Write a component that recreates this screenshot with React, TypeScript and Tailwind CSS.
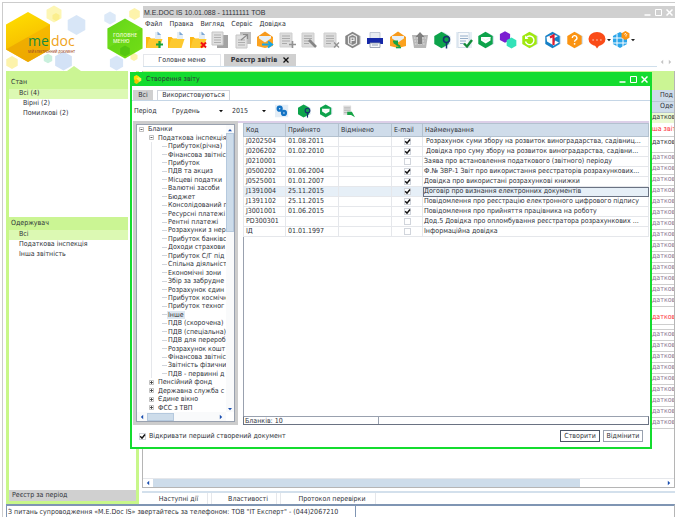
import React, { useState } from "react";

interface HexProps {
  cx: number;
  cy: number;
  r: number;
  fill: string;
  opacity?: number;
}

// Hexagon with a vertex on top
const Hex: React.FC<HexProps> = ({ cx, cy, r, fill, opacity = 1 }) => {
  const w = r * 0.88;
  const points = [
    [cx, cy - r],
    [cx + w, cy - r / 2],
    [cx + w, cy + r / 2],
    [cx, cy + r],
    [cx - w, cy + r / 2],
    [cx - w, cy - r / 2],
  ]
    .map((p) => p.join(","))
    .join(" ");
  return <polygon points={points} fill={fill} opacity={opacity} />;
};

const Icon: React.FC<{ children: React.ReactNode }> = ({ children }) => (
  <svg viewBox="0 0 18 18" className="block size-[18px]" aria-hidden="true">
    {children}
  </svg>
);

const Folder = ({ mark }: { mark?: "plus" | "cross" }) => (
  <Icon>
    <path d="M10 1h3.5l2.500 3v4h-6z" fill="#e3edf6" />
    <path d="M12.500 0.500v3.500h3.700z" fill="#7ba7d6" />
    <path d="M1 6h3.500l1.500 1.500h4V17H1z" fill="#fdb813" />
    <path d="M4 8h13.500L14.500 17H1.500z" fill="#fdc92f" />
    {mark === "plus" && <path d="M11 13.500h7M14.500 10v7" stroke="#14a33d" strokeWidth="2.200" />}
    {mark === "cross" && <path d="M12 11.500l5 5M17 11.500l-5 5" stroke="#f01010" strokeWidth="2" />}
  </Icon>
);

const GrayDoc = ({ mark }: { mark: "plus" | "pen" | "cross" }) => (
  <Icon>
    <path d="M2 2h12v14H2z" fill="#dcdcdc" stroke="#cfcfcf" />
    <path d="M4 5h8M4 7.500h8M4 10h8M4 12.500h5" stroke="#aaa" strokeWidth="1" />
    {mark === "plus" && <path d="M11 13.500h7M14.500 10v7" stroke="#929292" strokeWidth="1.600" />}
    {mark === "pen" && <path d="M9 9l7 7" stroke="#858585" strokeWidth="2.600" />}
    {mark === "cross" && <path d="M12 11.500l5 5M17 11.500l-5 5" stroke="#929292" strokeWidth="1.400" />}
  </Icon>
);

const GreenKeyIcon = () => (
  <Icon>
    <Hex cx={10.5} cy={9} r={8} fill="#d5e3ee" />
    <Hex cx={8.5} cy={9} r={8.2} fill="#0da34b" />
    <circle cx="13.500" cy="8.500" r="3" fill="#0da34b" stroke="#17306e" strokeWidth="1.500" />
    <path d="M13.500 11v6.500" stroke="#17306e" strokeWidth="1.500" />
  </Icon>
);

const GreenMailIcon = () => (
  <Icon>
    <Hex cx={10.5} cy={9} r={7.5} fill="#d5e3ee" />
    <Hex cx={8.5} cy={9} r={8.2} fill="#0da34b" />
    <path d="M4 6h9.500v3.500L8.700 12.500 4 9.500z" fill="#fff" />
    <path d="M4 6.500l4.700 3 4.800-3" stroke="#e2f4e8" fill="none" strokeWidth="0.800" />
  </Icon>
);

const toolbar = [
  { name: "Створити", icon: <Folder mark="plus" /> },
  { name: "Відкрити", icon: <Folder /> },
  { name: "Видалити", icon: <Folder mark="cross" /> },
  {
    name: "Копіювати",
    icon: (
      <Icon>
        <path d="M6 4h11v13H6z" fill="#a3a3a3" />
        <path d="M1 1h11v13H1z" fill="#e0e0e0" stroke="#c6c6c6" />
        <path d="M3 4h7M3 6.500h7M3 9h7M3 11.500h7" stroke="#b0b0b0" />
      </Icon>
    ),
  },
  {
    name: "Перемістити",
    icon: (
      <Icon>
        <path d="M6 1h11v12H6z" fill="#bdbdbd" />
        <path d="M2 4h11v13H2z" fill="#e0e0e0" stroke="#c6c6c6" />
        <path d="M4 9h7M4 11.500h7M4 14h7" stroke="#adadad" />
        <path d="M7 9l6-5M9 3.500h4.500V8" stroke="#8b8b8b" fill="none" strokeWidth="1.200" />
      </Icon>
    ),
  },
  {
    name: "Надіслати",
    icon: (
      <Icon>
        <path d="M1 6l8-5.500L17 6v8.500H1z" fill="#f79a1c" />
        <path d="M3 5h12v4l-6 3-6-3z" fill="#e6eff6" />
        <path d="M1 6l8 5.500L17 6v9L9 17l-8-2z" fill="#fba21f" />
        <path d="M6 13.500h9M12 10.500l4 3-4 3" stroke="#18a6e4" strokeWidth="2" fill="none" />
      </Icon>
    ),
  },
  { name: "Додати рядок", icon: <GrayDoc mark="plus" /> },
  { name: "Редагувати", icon: <GrayDoc mark="pen" /> },
  { name: "Вилучити рядок", icon: <GrayDoc mark="cross" /> },
  {
    name: "Архів",
    icon: (
      <Icon>
        <Hex cx={10.5} cy={9} r={7.5} fill="#dadada" />
        <Hex cx={8.5} cy={9} r={8.2} fill="#858585" />
        <path d="M4.500 5.500L8.500 3.500l4 2v7l-4 2-4-2z" fill="none" stroke="#e8e8e8" strokeWidth="1.200" />
        <path d="M7 7h3v2.500H7zM7 7v5.500" fill="none" stroke="#eee" strokeWidth="1.200" />
      </Icon>
    ),
  },
  {
    name: "Друк",
    icon: (
      <Icon>
        <path d="M4 1.500h10v6H4z" fill="#e8ecf2" stroke="#b4bccb" strokeWidth="0.800" />
        <path d="M1 7h16v6H1z" fill="#1528a8" />
        <path d="M4 12h10v4.500H4z" fill="#f4f6f9" stroke="#8692a6" strokeWidth="0.800" />
        <path d="M6 14h6" stroke="#91a0b8" />
      </Icon>
    ),
  },
  {
    name: "Обмін поштою",
    icon: (
      <Icon>
        <path d="M1 6l8-5.500L17 6v8.500H1z" fill="#f79a1c" />
        <path d="M3 5h12v4l-6 3-6-3z" fill="#e6eff6" />
        <path d="M1 6l8 5.500L17 6v9L9 17l-8-2z" fill="#fba21f" />
        <path d="M4 10.500h4v4M11 15.500L5 11.500" stroke="#16a345" strokeWidth="2" fill="none" />
        <path d="M7 16.500h5" stroke="#16a345" strokeWidth="1.600" />
      </Icon>
    ),
  },
  {
    name: "Відновити",
    icon: (
      <Icon>
        <path d="M1 4h16l-2 13H3z" fill="#b8b8b8" />
        <path d="M3 7h12M3.500 10h11M4 13h10" stroke="#e2e2e2" strokeDasharray="1.500 1.200" />
        <path d="M9 1l4.500 5H11v7H7V6H4.500z" fill="#7f7f7f" />
      </Icon>
    ),
  },
  { name: "Пошук", icon: <GreenKeyIcon /> },
  {
    name: "Перевірити",
    icon: (
      <Icon>
        <path d="M1 1h16v16H1z" fill="#e6eef5" />
        <path d="M3 1.500h11v15H3z" fill="#f8fafc" stroke="#c9d6e3" strokeWidth="0.800" />
        <path d="M5 5h8M5 7.500h8M5 10h6M5 12.500h4" stroke="#8ba6c4" strokeWidth="0.900" />
        <path d="M9 12.500l3 3L17 9" stroke="#128a38" strokeWidth="2.400" fill="none" />
      </Icon>
    ),
  },
  { name: "Пошта", icon: <GreenMailIcon /> },
  {
    name: "Довідники",
    icon: (
      <Icon>
        <Hex cx={6} cy={6} r={5.8} fill="#7b1fd1" />
        <Hex cx={12.5} cy={12} r={5.5} fill="#33e2b8" />
      </Icon>
    ),
  },
  {
    name: "Оновити",
    icon: (
      <Icon>
        <Hex cx={10.5} cy={9} r={7.5} fill="#d5e3ee" />
        <Hex cx={8.5} cy={9} r={8.2} fill="#9fe80e" />
        <path d="M5 7a4.300 4.300 0 1 1-.5 3.500" stroke="#fff" strokeWidth="1.400" fill="none" />
        <path d="M4 4.500v3.500h3.500z" fill="#fff" />
      </Icon>
    ),
  },
  {
    name: "1С",
    icon: (
      <Icon>
        <Hex cx={10.5} cy={9} r={7.5} fill="#d5e3ee" />
        <Hex cx={8.5} cy={9} r={8.2} fill="#1680c6" />
        <path d="M2.500 6l6-2.500 5.500 1.500-5 3v6L3 10.500z" fill="#fff" />
        <path d="M9 15l6-3.500-4-2z" fill="#fff" />
        <path d="M6 6.500l3.500-2v9.500" stroke="#e21a2c" strokeWidth="2.200" fill="none" />
      </Icon>
    ),
  },
  {
    name: "Допомога",
    icon: (
      <Icon>
        <Hex cx={10.5} cy={9} r={7.5} fill="#d5e3ee" />
        <Hex cx={8.5} cy={9} r={8.2} fill="#fb9412" />
        <path d="M6.300 7a2.300 2.300 0 1 1 3.300 2c-.8.500-1 .800-1 1.800" stroke="#fff" strokeWidth="1.400" fill="none" />
        <circle cx="8.600" cy="12.800" r="0.900" fill="#fff" />
      </Icon>
    ),
  },
  {
    name: "Повідомлення",
    icon: (
      <Icon>
        <ellipse cx="9" cy="8" rx="8.500" ry="7" fill="#fa4b18" />
        <path d="M6 13l3 4.500 3-4z" fill="#fa4b18" />
        <path d="M4.500 9h1.200M8.400 9h1.200M12.300 9h1.200" stroke="#fff" strokeWidth="1.200" />
      </Icon>
    ),
  },
];

const treeItems = [
  "Прибуток(річна)",
  "Фінансова звітніс",
  "Прибуток",
  "ПДВ та акциз",
  "Місцеві податки",
  "Валютні засоби",
  "Бюджет",
  "Консолідований п",
  "Ресурсні платежі",
  "Рентні платежі",
  "Розрахунки з нер",
  "Прибуток банківс",
  "Доходи страхови",
  "Прибуток С/Г під",
  "Спільна діяльніст",
  "Економічні зони",
  "Збір за забрудне",
  "Розрахунок єдин",
  "Прибуток космічн",
  "Прибуток техног",
  "Інше",
  "ПДВ (скорочена)",
  "ПДВ (спеціальна)",
  "ПДВ для перероб",
  "Розрахунок кошт",
  "Фінансова звітніс",
  "Звітність фізични",
  "ПДВ - первинні д",
];

const treeFolders = ["Пенсійний фонд", "Державна служба с", "Єдине вікно", "ФСС з ТВП"];

const reports = [
  { code: "J0202504", accepted: "01.08.2011", email: true, title: " Розрахунок суми збору на розвиток виноградарства, садівниц..." },
  { code: "J0206202", accepted: "01.02.2010", email: true, title: " Довідка про суму збору на розвиток виноградарства, садівни..." },
  { code: "J0210001", accepted: "", email: false, title: "Заява про встановлення податкового (звітного) періоду" },
  { code: "J0500202", accepted: "01.06.2004", email: true, title: "Ф.№ ЗВР-1 Звіт про використання реєстраторів розрахункових..." },
  { code: "J0525001", accepted: "01.01.2007", email: true, title: "Довідка про використані розрахункові книжки" },
  { code: "J1391004", accepted: "25.11.2015", email: true, title: "Договір про визнання електронних документів" },
  { code: "J1391102", accepted: "25.11.2015", email: true, title: "Повідомлення про реєстрацію електронного цифрового підпису" },
  { code: "J3001001", accepted: "01.06.2015", email: true, title: "Повідомлення про прийняття працівника на роботу" },
  { code: "PD300301", accepted: "", email: false, title: "Дод.5 Довідка про опломбування реєстратора розрахункових ..." },
  { code: "ІД", accepted: "01.01.1997", email: false, title: "Інформаційна довідка" },
];

const Checkbox: React.FC<{ id: string; label?: string; checked: boolean; onChange: () => void }> = ({
  id,
  label,
  checked,
  onChange,
}) => (
  <span className="relative block size-[7px] shrink-0">
    <input
      id={id}
      type="checkbox"
      aria-label={label}
      checked={checked}
      onChange={onChange}
      className="block size-[7px] appearance-none border border-gray-300 bg-white"
    />
    {checked && (
      <svg viewBox="0 0 7 7" className="pointer-events-none absolute inset-0 size-[7px]">
        <path d="M1.200 3.300L3 5.200 6 1.500" stroke="#111" strokeWidth="1.500" fill="none" />
      </svg>
    )}
  </span>
);

const Arrow: React.FC<{ dir: "up" | "down" | "left" | "right"; color?: string }> = ({ dir, color = "#1b4fb0" }) => {
  const d = {
    up: "M1 4.200L3 2l2 2.200z",
    down: "M1 2L3 4.200l2-2.200z",
    left: "M4.200 0.800L1.800 3l2.400 2.200z",
    right: "M1.800 0.800L4.200 3l-2.400 2.200z",
  }[dir];
  return (
    <svg viewBox="0 0 6 6" className="block size-1.5 shrink-0" aria-hidden="true">
      <path d={d} fill={color} />
    </svg>
  );
};

const WindowButtons = () => (
  <div className="flex gap-1 text-white">
    <button aria-label="Згорнути">
      <svg viewBox="0 0 7 7" className="block size-[7px]">
        <path d="M0.500 6h6" stroke="currentColor" strokeWidth="1.500" />
      </svg>
    </button>
    <button aria-label="Розгорнути">
      <svg viewBox="0 0 7 7" className="block size-[7px]">
        <path d="M0.500 0.500h6v6h-6z" stroke="currentColor" fill="none" />
      </svg>
    </button>
    <button aria-label="Закрити">
      <svg viewBox="0 0 7 7" className="block size-[7px]">
        <path d="M0.500 0.500l6 6M6.500 0.500l-6 6" stroke="currentColor" strokeWidth="1.500" />
      </svg>
    </button>
  </div>
);

const Logo = () => (
  <svg viewBox="0 0 140 68" className="block h-[68px] w-[140px] shrink-0" role="img" aria-label="me doc">
    <defs>
      <linearGradient id="gold" x1="0" y1="0" x2="0.300" y2="1">
        <stop offset="0" stopColor="#ffe100" />
        <stop offset="1" stopColor="#f5b400" />
      </linearGradient>
      <linearGradient id="lime" x1="0" y1="0" x2="1" y2="1">
        <stop offset="0" stopColor="#5fd318" />
        <stop offset="1" stopColor="#86ea1e" />
      </linearGradient>
    </defs>
    <Hex cx={51} cy={11} r={8.5} fill="#fdf6b4" />
    <Hex cx={53} cy={14} r={4} fill="#fbee8c" />
    <Hex cx={73.5} cy={22} r={10} fill="#d8e6f7" />
    <Hex cx={107} cy={15} r={6.5} fill="#dce9f8" />
    <Hex cx={131.5} cy={11} r={6} fill="#fdf3ab" />
    <Hex cx={9} cy={59.5} r={6.5} fill="#fdf3ab" />
    <Hex cx={45} cy={55.5} r={4.8} fill="#c9f0dd" />
    <Hex cx={60.5} cy={58} r={9.5} fill="#d3e2f6" />
    <Hex cx={113.5} cy={60} r={7.5} fill="#d8e6f7" />
    <Hex cx={131} cy={54} r={4} fill="#fdf3ab" />
    <Hex cx={25} cy={34} r={25} fill="url(#gold)" />
    <path d="M3 46.500L25 34l22 12.500L25 59z" fill="#dd9a00" opacity="0.450" />
    <path d="M3 46.500l22-12.500 22-12.500v25L25 59z" fill="#f1a900" opacity="0.500" />
    <Hex cx={122} cy={35.5} r={20} fill="url(#lime)" />
    <path d="M105 45l34-20v20l-17 10.500z" fill="#53c90c" opacity="0.350" />
    <Hex cx={122} cy={48} r={5.5} fill="#45b90f" opacity={0.6} />
    <text x="25" y="43" fontSize="14" fontFamily="Open Sans, sans-serif" fill="#178a3c">
      me
    </text>
    <text x="48" y="43" fontSize="14" fontFamily="Open Sans, sans-serif" fill="#efa31a">
      doc
    </text>
    <text x="25" y="50" fontSize="3" fontFamily="Open Sans, sans-serif" fontWeight="600" fill="#a4502a">
      МІЙ ЕЛЕКТРОННИЙ ДОКУМЕНТ
    </text>
    <text x="122" y="34" fontSize="5" textAnchor="middle" fontFamily="Open Sans, sans-serif" fontWeight="600" fill="#effbd8">
      ГОЛОВНЕ
    </text>
    <text x="110" y="40" fontSize="5" fontFamily="Open Sans, sans-serif" fontWeight="600" fill="#effbd8">
      МЕНЮ
    </text>
  </svg>
);

const Header = () => (
  <header className="flex h-[68px] shrink-0">
    <Logo />
    <div className="flex min-w-0 flex-1 flex-col pt-[3px]">
      <div className="flex h-3 shrink-0 items-center justify-between bg-[#d0d0d0] pr-0.5 pl-px">
        <h1 className="font-['Liberation_Sans',sans-serif]">M.E.DOC IS 10.01.088 - 11111111 ТОВ</h1>
        <WindowButtons />
      </div>
      <nav className="flex h-3 shrink-0 items-center gap-[7px] pl-0.5">
        {["Файл", "Правка", "Вигляд", "Сервіс", "Довідка"].map((item) => (
          <button key={item}>{item}</button>
        ))}
      </nav>
      <div className="flex h-[20px] shrink-0 items-center pl-0.5">
        <div className="flex w-[461px] shrink-0 justify-between">
          {toolbar.map((tool) => (
            <button key={tool.name} aria-label={tool.name}>
              {tool.icon}
            </button>
          ))}
        </div>
        <Arrow dir="down" color="#222" />
        <button aria-label="Підтримка">
          <Icon>
            <Hex cx={8} cy={9} r={8} fill="#2aa5ea" />
            <path d="M5 3v13M11 5v11M1 7h14M1 12h14" stroke="#fff" strokeWidth="1" />
            <Hex cx={13.5} cy={4.5} r={4.5} fill="#fb9412" />
            <path d="M12.500 3.500a1 1 0 1 1 1.500 1v1" stroke="#fff" fill="none" strokeWidth="0.900" />
          </Icon>
        </button>
        <Arrow dir="down" color="#222" />
      </div>
      <div className="mt-1 flex h-[13px] shrink-0 items-end">
        <div className="flex h-full flex-1 gap-[3px] border-b border-[#cfdfec]">
          <button className="w-[78px] border border-b-0 border-gray-200">Головне меню</button>
          <button className="flex w-[72px] items-center justify-center gap-1.5 bg-[#d0d0d0] font-bold">
            <span>Реєстр звітів</span>
            <svg viewBox="0 0 6 6" className="size-1.5">
              <path d="M0.500 0.500l5 5M5.500 0.500l-5 5" stroke="#111" strokeWidth="1.300" />
            </svg>
          </button>
        </div>
        <div className="flex gap-0.5 px-0.5 pb-0.5">
          <Arrow dir="left" color="#c4c4c4" />
          <Arrow dir="right" color="#c4c4c4" />
        </div>
      </div>
    </div>
  </header>
);

const Sidebar = () => (
  <aside className="relative ml-[3px] flex w-[133px] shrink-0 flex-col border-[3px] border-t-0 border-[#c8f78a]">
    <svg viewBox="0 0 14 5" className="absolute -top-[5px] left-[58px] h-[5px] w-3.5">
      <path d="M0 5l7-5 7 5z" fill="#cbf594" />
    </svg>
    <section className="h-[146px] shrink-0">
      <h2 className="mr-2 flex h-[18px] items-end bg-[#cbf594] pb-0.5 pl-0.5">Стан</h2>
      <ul className="mr-2">
        <li className="h-[10px] bg-[#dcf9b3] pl-2.5">Всі (4)</li>
        <li className="h-[10px] pl-3.5">Вірні (2)</li>
        <li className="h-[10px] pl-3.5">Помилкові (2)</li>
      </ul>
    </section>
    <section className="flex-1">
      <h2 className="mr-2 flex h-[13px] items-center bg-[#cbf594] pl-0.5">Одержувач</h2>
      <ul className="mr-2">
        <li className="h-[10px] bg-[#dcf9b3] pl-2.5">Всі</li>
        <li className="h-[10px] pl-2.5">Податкова інспекція</li>
        <li className="h-[10px] pl-2.5">Інша звітність</li>
      </ul>
    </section>
    <button className="h-[11px] bg-[#d0d0d0] pl-[3px] text-left">Реєстр за період</button>
  </aside>
);

const Registry = () => (
  <main className="ml-[3px] flex min-w-0 flex-1 flex-col">
    <div className="flex flex-1 flex-col overflow-hidden border border-t-0 border-[#b5b5b5]">
      <div className="h-[19px] shrink-0 bg-[#cbf594]" />
      <table className="ml-auto w-[22px] table-fixed border-collapse whitespace-nowrap">
        <thead>
          <tr className="h-[11px] border-b border-[#b9c6d4] bg-[#cfdcea]">
            <th className="pl-2 text-left font-normal">Под</th>
          </tr>
          <tr className="h-[11px] border-b border-[#b9c6d4] bg-[#cfdcea]">
            <th className="pl-2 text-left font-normal">Оде</th>
          </tr>
        </thead>
        <tbody>
          <tr className="h-[11px] bg-[#ecf9d2]">
            <td>датков</td>
          </tr>
          <tr className="h-[13px] border-b border-[#cecece] text-red-500">
            <td>ша звіт</td>
          </tr>
          <tr className="h-[12px]">
            <td>датков</td>
          </tr>
          <tr className="h-[4px] border-b border-[#cecece]">
            <td />
          </tr>
          {Array.from({ length: 14 }, (_, i) => (
            <tr key={i} className="h-[11px] border-b border-[#cecece] text-[#8a7590]">
              <td>датков</td>
            </tr>
          ))}
          <tr className="h-[18px] border-b border-[#cecece] text-red-500">
            <td className="pt-1">датков</td>
          </tr>
          <tr className="h-[5px] border-b border-[#cecece]">
            <td />
          </tr>
          {Array.from({ length: 9 }, (_, i) => (
            <tr key={i} className="h-[11px] border-b border-[#cecece] text-[#8a7590]">
              <td>датков</td>
            </tr>
          ))}
        </tbody>
      </table>
      <div className="mt-auto flex h-[9px] items-center justify-between border-t border-gray-200 px-0.5">
        <Arrow dir="left" />
        <div className="mr-[86px] ml-0.5 h-full flex-1 bg-[#cddcea]" />
        <Arrow dir="right" />
      </div>
    </div>
    <div className="mt-[3px] flex h-[13px] gap-[3px] border-t-2 border-[#d3e0ec]">
      <button className="w-[66px] border-r border-gray-200 pt-px pl-2">Наступні дії</button>
      <button className="w-[66px] border-x border-gray-200 pt-px pl-2">Властивості</button>
      <button className="w-[96px] border-x border-gray-200 pt-px pl-2">Протокол перевірки</button>
    </div>
  </main>
);

const Toggle: React.FC<{ open: boolean }> = ({ open }) => (
  <svg viewBox="0 0 5 5" className="size-[5px] shrink-0 bg-white" aria-hidden="true">
    <path d="M0.500 0.500h4v4h-4z" fill="none" stroke="#a8a8a8" strokeWidth="0.700" />
    <path d={open ? "M1.500 2.500h2" : "M1 2.500h3M2.500 1v3"} stroke="#333" strokeWidth="0.800" />
  </svg>
);

const BlankTree = () => {
  const [selected, setSelected] = useState("Інше");

  return (
    <div className="flex w-[105px] shrink-0 border-[3px] border-[#cccccc]">
      <div className="flex min-w-0 flex-1 flex-col border border-gray-400 bg-white">
        <div className="flex min-h-0 flex-1">
          <ul className="flex min-w-0 flex-1 flex-col overflow-hidden whitespace-nowrap">
            <li className="flex flex-1 items-center gap-1 pl-0.5 leading-[8px]">
              <Toggle open />
              Бланки
            </li>
            <li className="flex flex-1 items-center gap-1 pl-3 leading-[8px]">
              <Toggle open />
              Податкова інспекція
            </li>
            {treeItems.map((item, i) => (
              <li key={i} className="ml-3.5 flex flex-1 items-center border-l border-gray-200 pl-2 leading-[8px]">
                <span className="ml-0.5 h-px w-[5px] shrink-0 bg-gray-300" />
                <button
                  onClick={() => setSelected(item)}
                  className={`px-px ${selected === item ? "bg-[#dfe8f1]" : ""}`}
                >
                  {item}
                </button>
              </li>
            ))}
            {treeFolders.map((item) => (
              <li key={item} className="flex flex-1 items-center gap-1 pl-3 leading-[8px]">
                <Toggle open={false} />
                {item}
              </li>
            ))}
          </ul>
          <div className="flex w-2 flex-col items-center justify-between bg-gray-50 pt-0.5">
            <Arrow dir="up" />
            <div className="mb-auto h-[99px] w-full border border-[#b5c9de] bg-[#cddcea]" />
            <Arrow dir="down" />
          </div>
        </div>
        <div className="mr-2 flex h-[9px] items-center justify-between bg-gray-50 px-0.5">
          <Arrow dir="left" />
          <div className="mr-auto ml-0.5 h-2 w-[27px] border border-[#b5c9de] bg-[#cddcea]" />
          <Arrow dir="right" />
        </div>
      </div>
    </div>
  );
};

const ReportTable = () => {
  const [rows, setRows] = useState(reports);

  const toggleEmail = (code: string) =>
    setRows(rows.map((r) => (r.code === code ? { ...r, email: !r.email } : r)));

  return (
    <div className="flex min-w-0 flex-1 flex-col">
      <table className="w-full table-fixed border-collapse whitespace-nowrap">
        <colgroup>
          <col className="w-[42px]" />
          <col className="w-[53px]" />
          <col className="w-[53px]" />
          <col className="w-[31px]" />
          <col />
        </colgroup>
        <thead>
          <tr className="h-[13px] bg-[#cfdcea] text-left">
            {["Код", "Прийнято", "Відмінено", "E-mail", "Найменування"].map((title) => (
              <th key={title} className="border border-[#b3c1cf] py-0 pl-0.5 font-normal">
                {title}
              </th>
            ))}
          </tr>
        </thead>
        <tbody>
          {rows.map((row) => (
            <tr key={row.code} className={`h-[10px] ${row.code === "J1391004" ? "bg-[#e6eff7]" : ""}`}>
              <td className="border border-gray-200 pl-0.5">{row.code}</td>
              <td className="border border-gray-200 pl-0.5">{row.accepted}</td>
              <td className="border border-gray-200" />
              <td className="border border-gray-200">
                <div className="flex justify-center">
                  <Checkbox
                    id={`email-${row.code}`}
                    label={`E-mail ${row.code}`}
                    checked={row.email}
                    onChange={() => toggleEmail(row.code)}
                  />
                </div>
              </td>
              <td
                className={`overflow-hidden border border-gray-200 pl-px whitespace-pre ${
                  row.code === "J1391004" ? "outline -outline-offset-1 outline-gray-500" : ""
                }`}
              >
                {row.title}
              </td>
            </tr>
          ))}
        </tbody>
      </table>
      <div className="flex-1 border-l border-gray-400" />
      <div className="flex h-[9px] border border-gray-500 border-t-gray-400">
        <span className="w-[135px] border-r border-gray-400 pl-px leading-[8px]">Бланків: 10</span>
      </div>
    </div>
  );
};

const CreateReportDialog = () => {
  const [openFirst, setOpenFirst] = useState(true);

  return (
    <div
      role="dialog"
      aria-labelledby="dialog-title"
      className="absolute top-[72px] right-[25px] bottom-[68px] left-[130px] flex flex-col border-2 border-t-0 border-[#14dc2f] bg-white"
    >
      <div className="flex h-[14px] shrink-0 items-center bg-[#14dc2f] pr-0.5 pl-px">
        <svg viewBox="0 0 9 9" className="mr-1 size-[9px]" aria-hidden="true">
          <Hex cx={3.5} cy={3} r={3} fill="#ffe000" />
          <Hex cx={6} cy={4.5} r={2.6} fill="#fff04d" />
          <Hex cx={3.5} cy={6.5} r={2.4} fill="#f5c400" />
        </svg>
        <h2 id="dialog-title" className="flex-1">
          Створення звіту
        </h2>
        <WindowButtons />
      </div>

      <div className="mt-1 flex h-[11px] shrink-0 gap-1 border-b border-[#c5d6e6] pl-px">
        <button className="w-5 bg-[#d0d0d0]">Всі</button>
        <button className="w-[73px] border border-b-0 border-gray-300">Використовуються</button>
      </div>

      <div className="flex h-5 shrink-0 items-center pl-0.5">
        <label htmlFor="month" className="w-[38px]">
          Період
        </label>
        <div className="relative w-[60px]">
          <select id="month" defaultValue="Грудень" className="block h-[10px] w-full appearance-none bg-transparent">
            <option>Листопад</option>
            <option>Грудень</option>
          </select>
          <div className="pointer-events-none absolute inset-y-0 right-2 flex items-center">
            <Arrow dir="down" color="#111" />
          </div>
        </div>
        <div className="relative w-[43px]">
          <select
            aria-label="Рік"
            defaultValue="2015"
            className="block h-[10px] w-full appearance-none bg-transparent"
          >
            <option>2014</option>
            <option>2015</option>
          </select>
          <div className="pointer-events-none absolute inset-y-0 right-2 flex items-center">
            <Arrow dir="down" color="#111" />
          </div>
        </div>
        <div className="flex gap-2">
          <button aria-label="Оновити список" className="size-3.5">
            <svg viewBox="0 0 18 18" className="block size-3.5">
              <path d="M0 1h17v16H0z" fill="#e3edf6" />
              <circle cx="6" cy="6" r="2.500" fill="#e3edf6" stroke="#1373c4" strokeWidth="3" />
              <circle cx="11.500" cy="11.500" r="2.500" fill="#e3edf6" stroke="#1373c4" strokeWidth="3" />
            </svg>
          </button>
          <button aria-label="Пошук бланка" className="size-3.5 [&_svg]:size-3.5">
            <GreenKeyIcon />
          </button>
          <button aria-label="Електронна пошта" className="size-3.5 [&_svg]:size-3.5">
            <GreenMailIcon />
          </button>
          <button aria-label="Імпорт" className="size-3.5">
            <svg viewBox="0 0 18 18" className="block size-3.5">
              <path d="M3 2h10v12H3z" fill="#dcdcdc" />
              <path d="M4 5h8M4 8h8M4 11h6" stroke="#aaa" />
              <path d="M8 10h6l4 7-5-3H8z" fill="#16a345" />
            </svg>
          </button>
        </div>
      </div>

      <div className="flex min-h-0 flex-1 px-px">
        <BlankTree />
        <div className="flex min-w-0 flex-1 flex-col">
          <div className="h-0.5 shrink-0 bg-[#dccfe8]" />
          <div className="flex flex-1 pl-[5px]">
            <ReportTable />
          </div>
        </div>
      </div>

      <div className="flex h-[22px] shrink-0 items-center gap-[3px] pr-[7px] pl-[7px]">
        <Checkbox id="open-first" checked={openFirst} onChange={() => setOpenFirst(!openFirst)} />
        <label htmlFor="open-first" className="flex-1">
          Відкривати перший створений документ
        </label>
        <button className="h-3 w-10 border border-gray-600">Створити</button>
        <button className="h-3 w-10 border border-gray-400">Відмінити</button>
      </div>
    </div>
  );
};

export default function App() {
  return (
    <div className="relative flex h-screen flex-col overflow-hidden bg-white pt-0.5 pr-0.5 pl-0.5 font-['DejaVu_Sans_Condensed','DejaVu_Sans',sans-serif] text-[7px] leading-[9px] text-[#2e3038]">
      <div className="flex min-h-0 flex-1 flex-col border-t border-l border-[#cccccc]">
        <Header />
        <div className="flex min-h-0 flex-1">
          <Sidebar />
          <Registry />
        </div>
        <footer className="ml-[3px] flex h-[13px] shrink-0 border-t-2 border-r border-t-[#7f95b3] border-r-[#b5b5b5]">
          <p className="w-[350px] border-r border-l border-[#7f95b3] pt-0.5 pl-px">
            З питань супроводження «M.E.Doc IS» звертайтесь за телефоном: ТОВ "ІТ Експерт" - (044)2067210
          </p>
        </footer>
      </div>
      <CreateReportDialog />
    </div>
  );
}
